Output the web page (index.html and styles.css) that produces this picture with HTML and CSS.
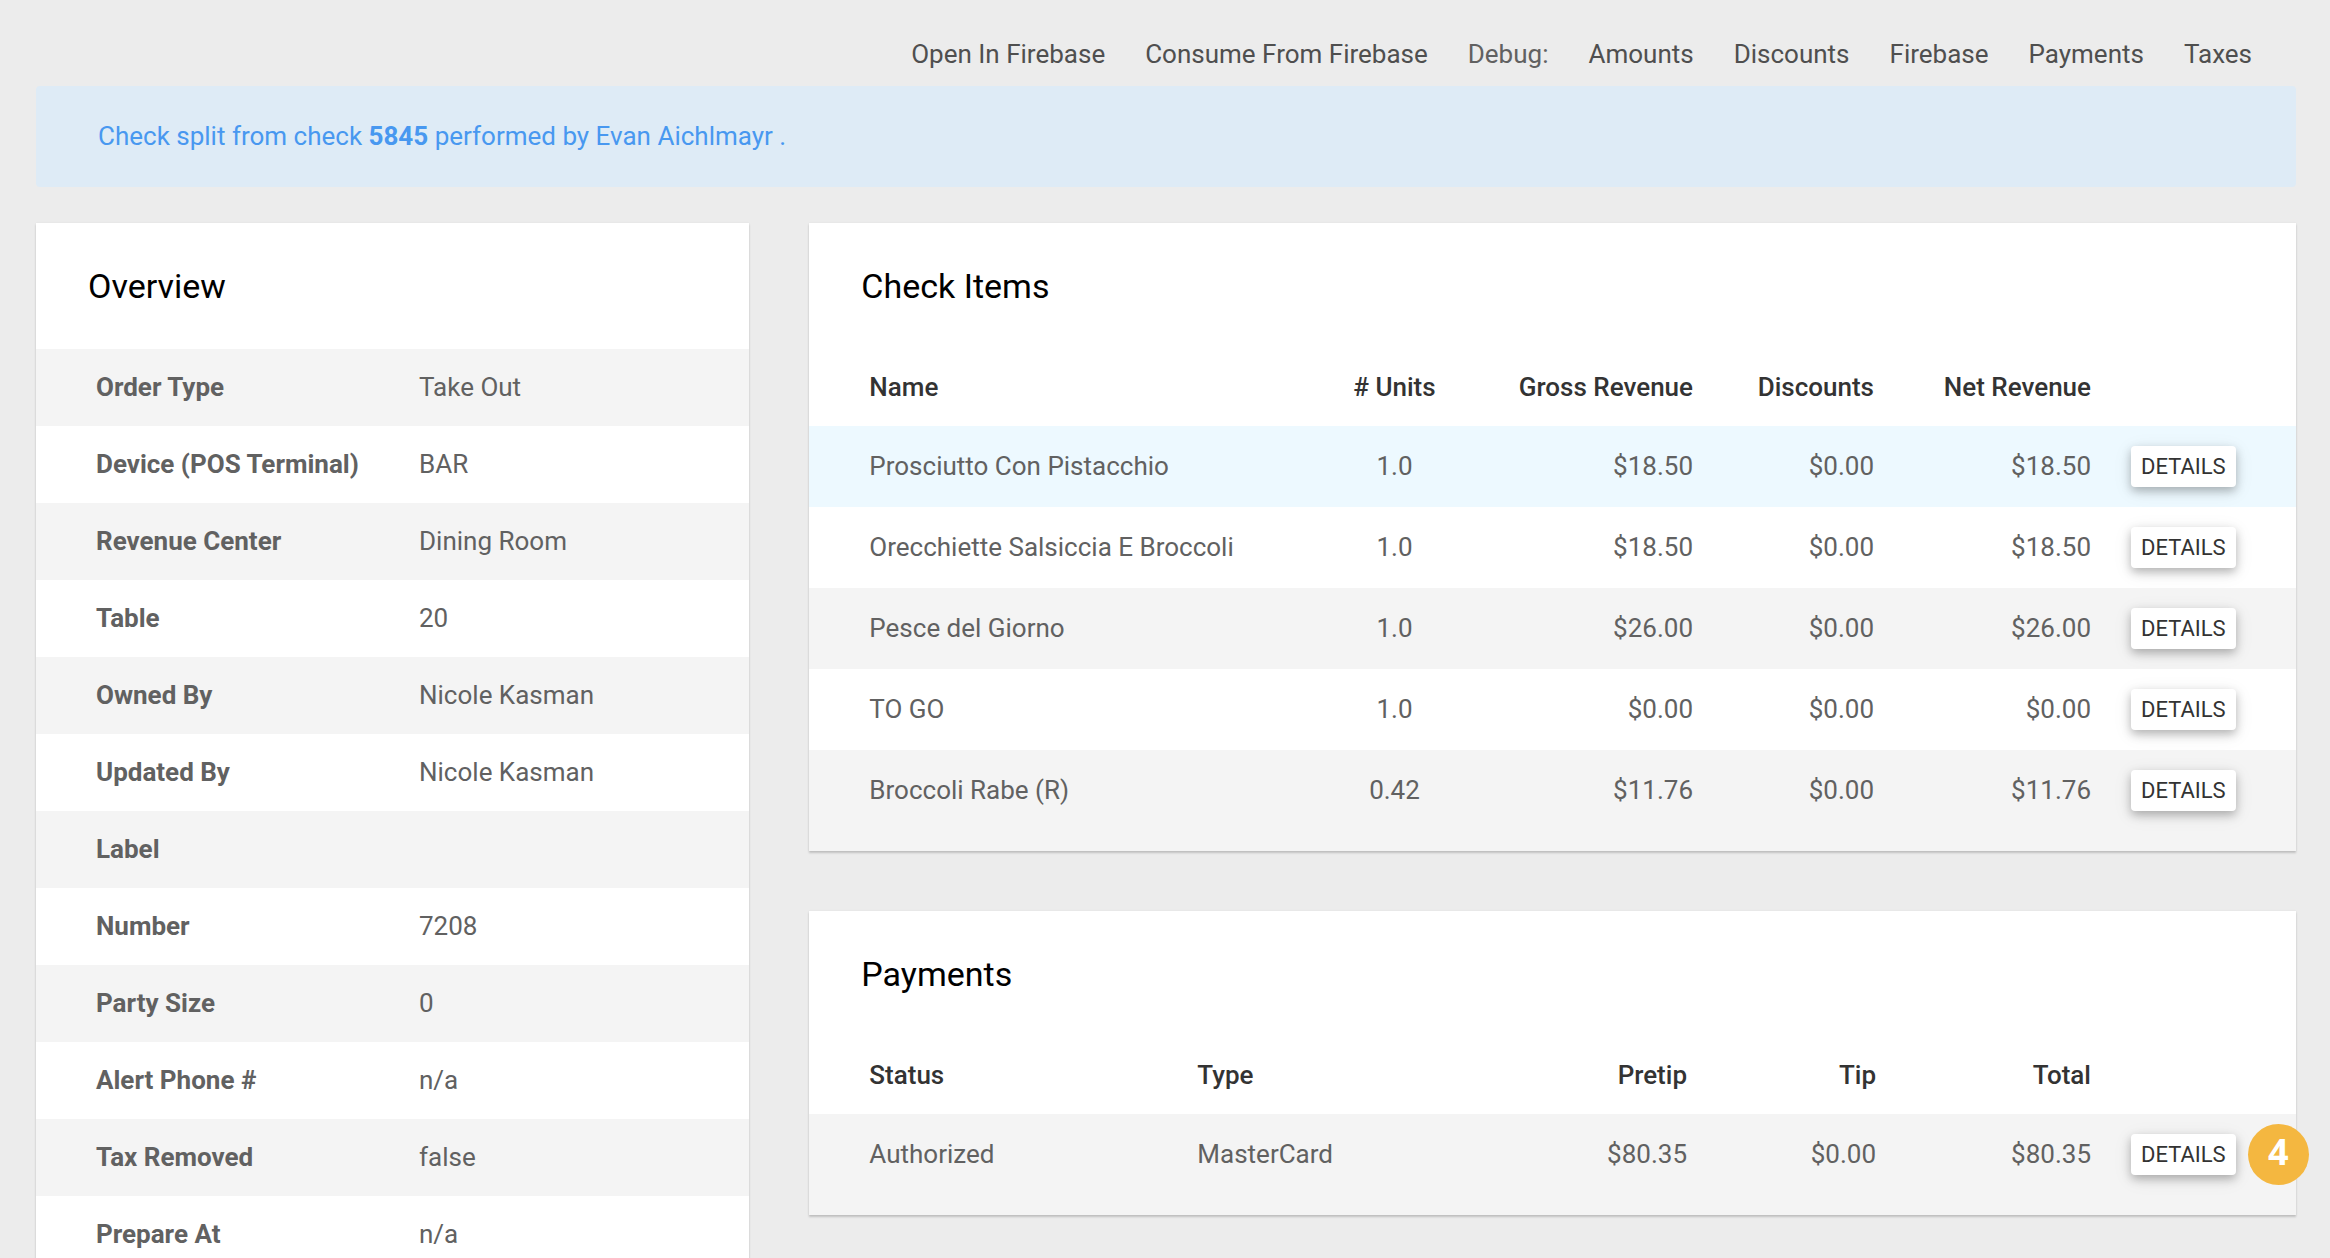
FILE: index.html
```html
<!DOCTYPE html>
<html lang="en">
<head>
	<meta charset="utf-8">
	<title>Check 7208</title>
	<link rel="stylesheet" href="styles.css">
</head>
<body>
	<nav class="toolbar">
		<a href="#">Open In Firebase</a>
		<a href="#">Consume From Firebase</a>
		<span class="toolbar-label">Debug:</span>
		<a href="#">Amounts</a>
		<a href="#">Discounts</a>
		<a href="#">Firebase</a>
		<a href="#">Payments</a>
		<a href="#">Taxes</a>
	</nav>
	<div class="alert">Check split from check <a href="#">5845</a> performed by Evan Aichlmayr .</div>
	<main class="content">
		<section class="card overview">
			<h2>Overview</h2>
			<table>
				<tr><th scope="row">Order Type</th><td>Take Out</td></tr>
				<tr><th scope="row">Device (POS Terminal)</th><td>BAR</td></tr>
				<tr><th scope="row">Revenue Center</th><td>Dining Room</td></tr>
				<tr><th scope="row">Table</th><td>20</td></tr>
				<tr><th scope="row">Owned By</th><td>Nicole Kasman</td></tr>
				<tr><th scope="row">Updated By</th><td>Nicole Kasman</td></tr>
				<tr><th scope="row">Label</th><td></td></tr>
				<tr><th scope="row">Number</th><td>7208</td></tr>
				<tr><th scope="row">Party Size</th><td>0</td></tr>
				<tr><th scope="row">Alert Phone #</th><td>n/a</td></tr>
				<tr><th scope="row">Tax Removed</th><td>false</td></tr>
				<tr><th scope="row">Prepare At</th><td>n/a</td></tr>
			</table>
		</section>
		<div class="main-col">
			<section class="card items">
				<h2>Check Items</h2>
				<table>
					<thead>
						<tr>
							<th class="name">Name</th>
							<th class="units"># Units</th>
							<th class="gross num">Gross Revenue</th>
							<th class="disc num">Discounts</th>
							<th class="net num">Net Revenue</th>
							<th class="action"></th>
						</tr>
					</thead>
					<tbody>
						<tr class="active">
							<td>Prosciutto Con Pistacchio</td>
							<td class="units">1.0</td>
							<td class="num">$18.50</td>
							<td class="num">$0.00</td>
							<td class="num">$18.50</td>
							<td><button type="button" class="btn">DETAILS</button></td>
						</tr>
						<tr>
							<td>Orecchiette Salsiccia E Broccoli</td>
							<td class="units">1.0</td>
							<td class="num">$18.50</td>
							<td class="num">$0.00</td>
							<td class="num">$18.50</td>
							<td><button type="button" class="btn">DETAILS</button></td>
						</tr>
						<tr>
							<td>Pesce del Giorno</td>
							<td class="units">1.0</td>
							<td class="num">$26.00</td>
							<td class="num">$0.00</td>
							<td class="num">$26.00</td>
							<td><button type="button" class="btn">DETAILS</button></td>
						</tr>
						<tr>
							<td>TO GO</td>
							<td class="units">1.0</td>
							<td class="num">$0.00</td>
							<td class="num">$0.00</td>
							<td class="num">$0.00</td>
							<td><button type="button" class="btn">DETAILS</button></td>
						</tr>
						<tr>
							<td>Broccoli Rabe (R)</td>
							<td class="units">0.42</td>
							<td class="num">$11.76</td>
							<td class="num">$0.00</td>
							<td class="num">$11.76</td>
							<td><button type="button" class="btn">DETAILS</button></td>
						</tr>
					</tbody>
				</table>
			</section>
			<section class="card payments">
				<h2>Payments</h2>
				<table>
					<thead>
						<tr>
							<th class="status">Status</th>
							<th class="type">Type</th>
							<th class="pretip num">Pretip</th>
							<th class="tip num">Tip</th>
							<th class="total num">Total</th>
							<th class="action"></th>
						</tr>
					</thead>
					<tbody>
						<tr>
							<td>Authorized</td>
							<td>MasterCard</td>
							<td class="num">$80.35</td>
							<td class="num">$0.00</td>
							<td class="num">$80.35</td>
							<td>
								<div class="step">
									<button type="button" class="btn">DETAILS</button>
									<span class="badge">4</span>
								</div>
							</td>
						</tr>
					</tbody>
				</table>
			</section>
		</div>
	</main>
</body>
</html>
```
FILE: styles.css
```css
*{
	box-sizing: border-box;
}
body{
	margin: 0;
	padding: 0 34px 0 36px;
	background-color: #ececec;
	font-family: Roboto, "Liberation Sans", sans-serif;
	font-size: 26px;
	line-height: 37px;
	color: #616161;
}
a{
	text-decoration: none;
}

/* top links */
.toolbar{
	display: flex;
	justify-content: flex-end;
	gap: 40px;
	padding: 36px 44px 13px 0;
}
.toolbar a{
	color: #4f4f4f;
}
.alert{
	padding: 32px 62px;
	border-radius: 4px;
	background-color: #deebf6;
	color: #4898f0;
}
.alert a{
	color: inherit;
	font-weight: 700;
}

.content{
	display: grid;
	grid-template-columns: repeat(3, minmax(0, 1fr));
	gap: 60px;
	align-items: start;
	margin-top: 36px;
}
.main-col{
	grid-column: span 2;
	display: grid;
	gap: 60px;
}
.card{
	background-color: #fff;
	box-shadow: 0 2px 2px rgba(0,0,0,.18), 0 0 2px rgba(0,0,0,.06);
}
.card h2{
	margin: 0;
	padding: 40px 52px;
	font-size: 34px;
	line-height: 46px;
	font-weight: 400;
	color: #000;
}

/* tables */
table{
	width: 100%;
	table-layout: fixed;
	border-collapse: collapse;
}
th, td{
	padding: 20px;
	text-align: left;
	vertical-align: middle;
}
th:first-child, td:first-child{
	padding-left: 60px;
}
thead th{
	font-weight: 500;
	color: #333;
}
.units{
	text-align: center;
}
.num{
	text-align: right;
}
.overview th{
	width: 363px;
	font-weight: 700;
}
.overview tr:nth-child(odd),
.main-col tbody tr:nth-child(odd){
	background-color: #f4f4f4;
}
.main-col tbody tr.active{
	background-color: #edf9ff;
}
.main-col tbody tr:last-child td{
	padding-bottom: 40px;
}
th.units{
	width: 141px;
}
.gross{
	width: 248px;
}
.disc{
	width: 181px;
}
.net{
	width: 217px;
}
.action{
	width: 185px;
}
.status{
	width: 368px;
}
.pretip{
	width: 200px;
}
.tip{
	width: 189px;
}
.total{
	width: 215px;
}

.btn{
	display: block;
	padding: 5px 10px;
	border: 0;
	border-radius: 4px;
	background-color: #fff;
	box-shadow: 0 4px 10px rgba(0,0,0,.26), 0 4px 20px rgba(0,0,0,.08);
	font-family: inherit;
	font-size: 22px;
	line-height: 31px;
	color: #333;
	cursor: pointer;
}
.step{
	position: relative;
	width: max-content;
}
.badge{
	position: absolute;
	top: -10px;
	left: calc(100% + 12px);
	width: 61px;
	height: 61px;
	border-radius: 50%;
	background-color: #f4b740;
	color: #fff;
	font-family: "Open Sans", sans-serif;
	font-size: 36px;
	font-weight: 700;
	line-height: 56px;
	text-align: center;
}
```
